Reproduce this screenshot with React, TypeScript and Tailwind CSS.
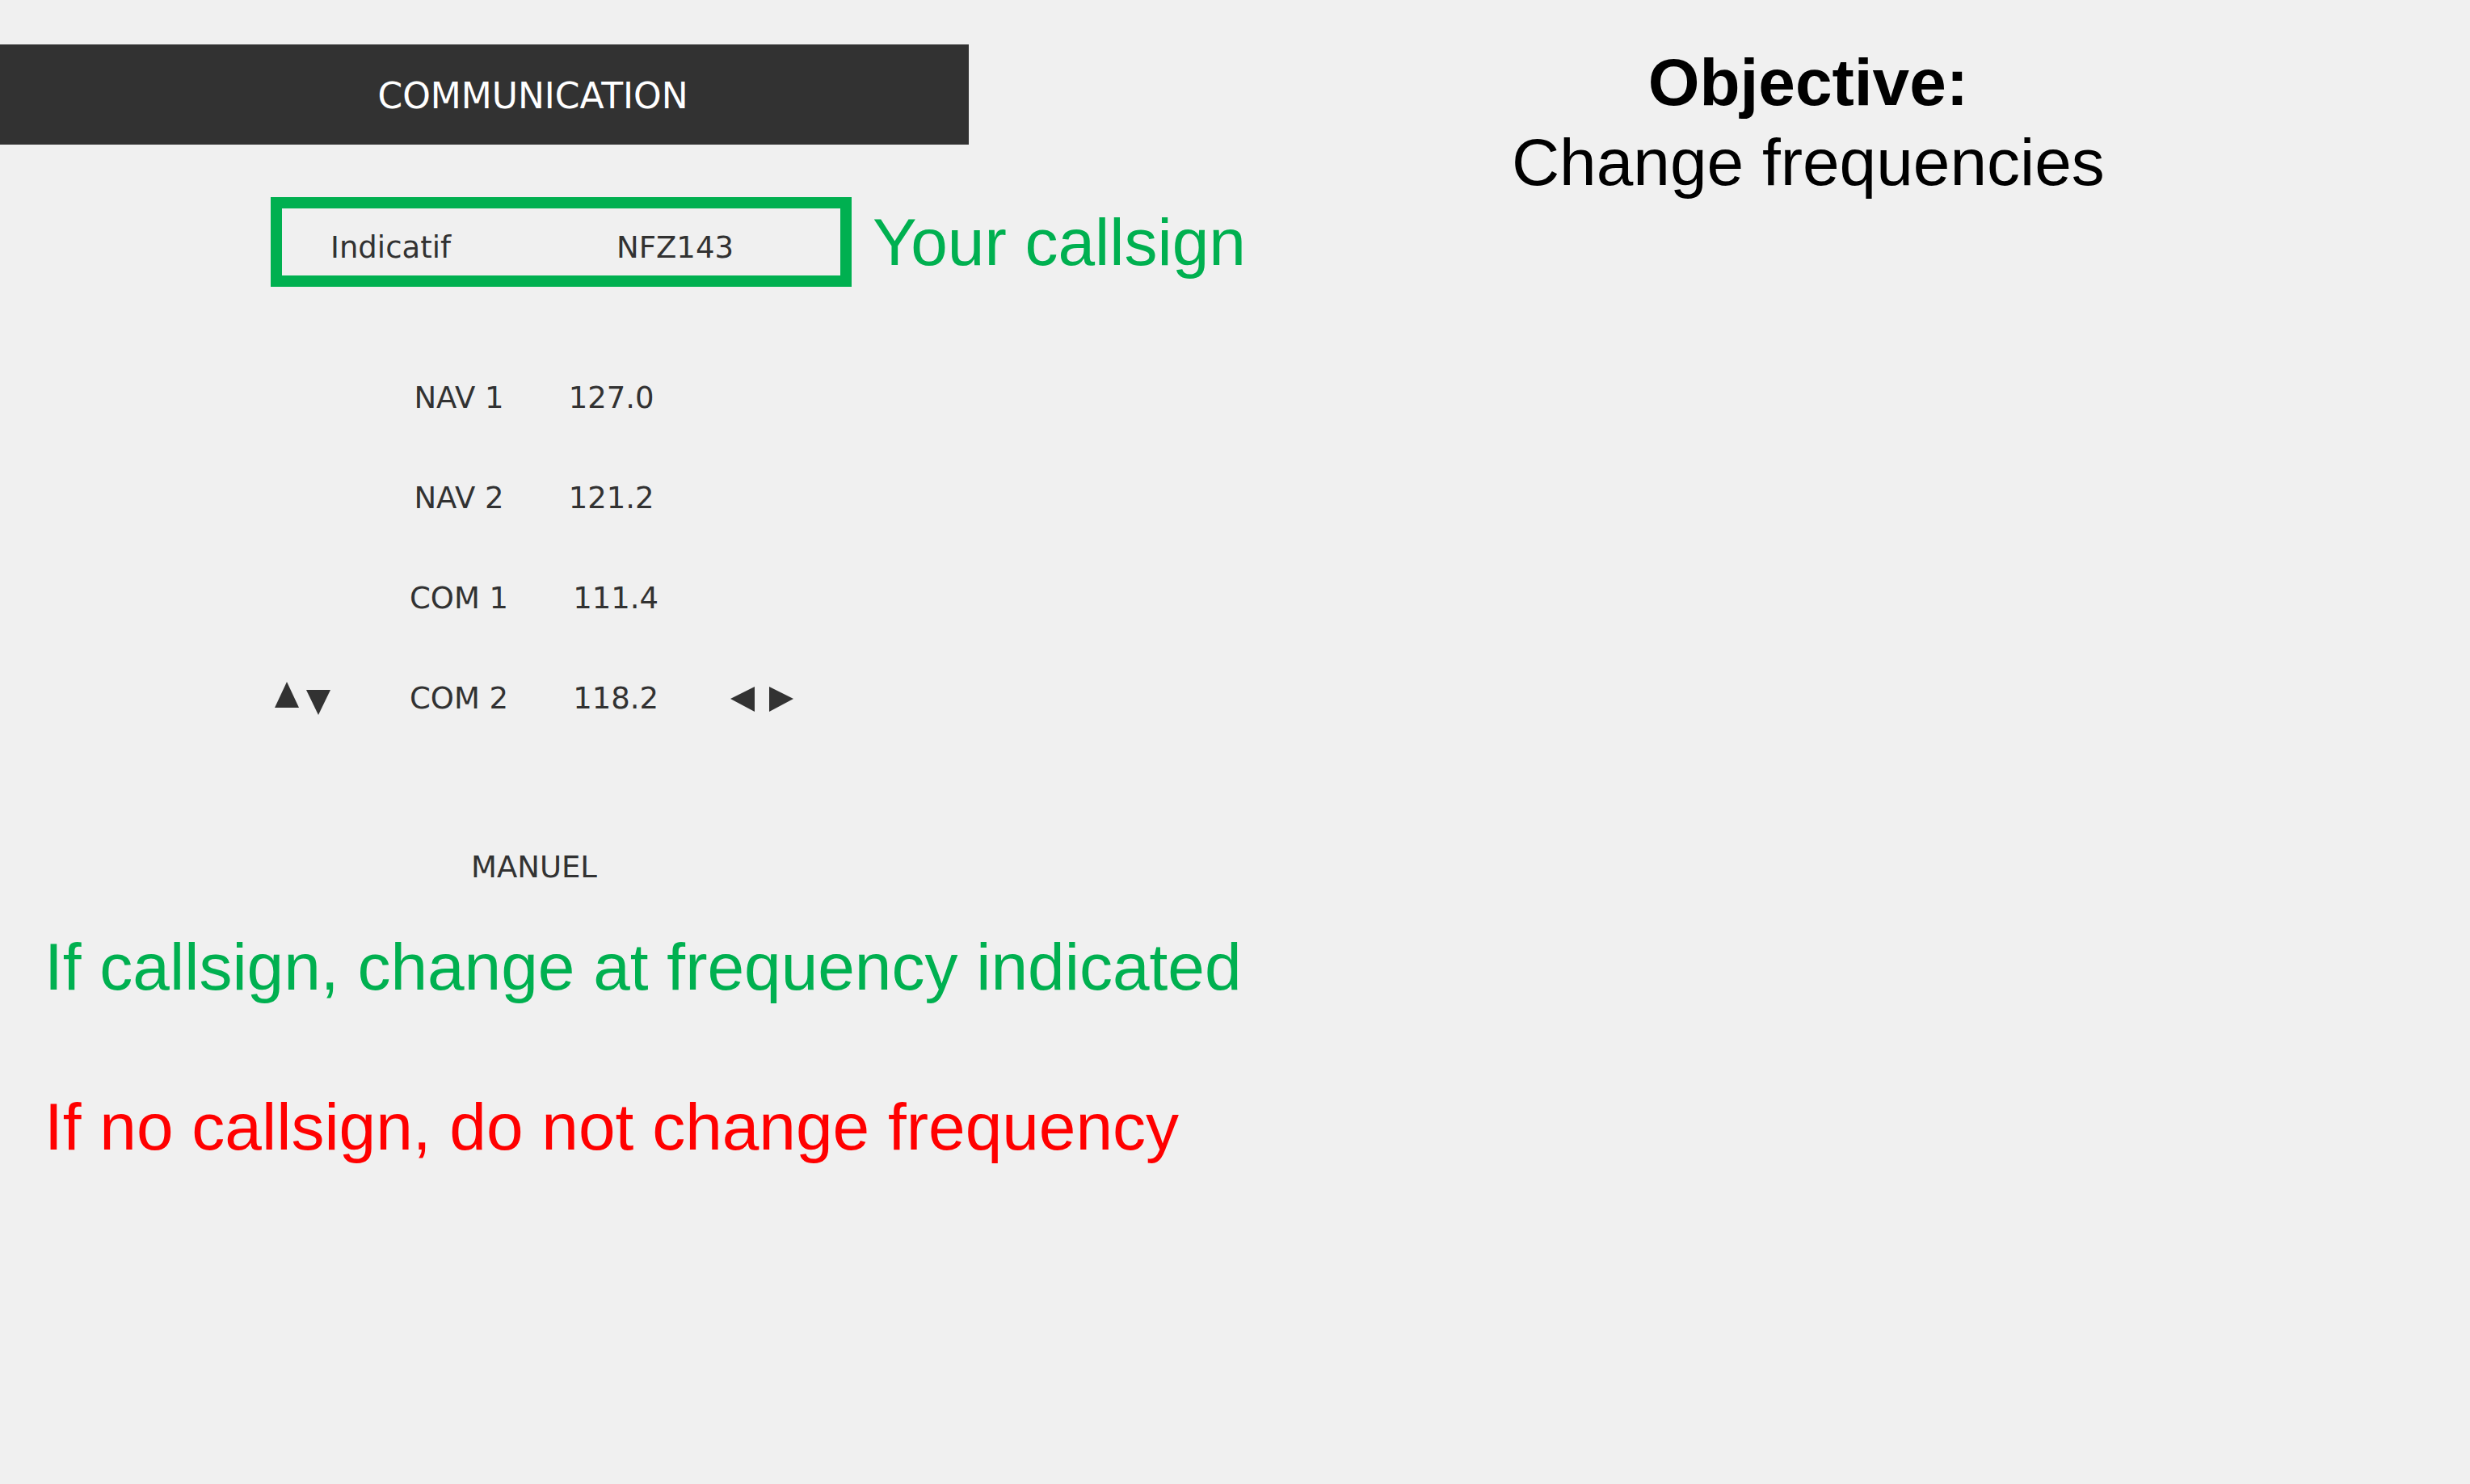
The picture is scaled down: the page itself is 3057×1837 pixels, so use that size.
import React from 'react';

const radios = [
  { label: 'NAV 1', frequency: '127.0' },
  { label: 'NAV 2', frequency: '121.2' },
  { label: 'COM 1', frequency: '111.4' },
  { label: 'COM 2', frequency: '118.2', selected: true },
];

function ArrowButton({ label, points, className = '' }: { label: string; points: string; className?: string }) {
  return (
    <button type="button" aria-label={label} className={className}>
      <svg width="30" height="31" viewBox="0 0 30 31" className="block overflow-visible" fill="#323232">
        <polygon points={points} />
      </svg>
    </button>
  );
}

function RadioRow({ label, frequency, selected }: { label: string; frequency: string; selected?: boolean }) {
  return (
    <li className="grid h-[124px] w-[642px] grid-cols-[1fr_auto_1fr] items-center">
      <div className="flex gap-[9px]">
        {selected && (
          <>
            <ArrowButton label="Previous radio" points="15,-1 30,31 0,31" className="pb-[9px]" />
            <ArrowButton label="Next radio" points="0,0 30,0 15,31" className="pt-[9px]" />
          </>
        )}
      </div>
      <div className="flex gap-[80px] whitespace-pre">
        <span>{label}</span>
        <span>{frequency}</span>
      </div>
      <div className="flex justify-end gap-[18px]">
        {selected && (
          <>
            <ArrowButton label="Decrease frequency" points="30,0 30,31 0,15" />
            <ArrowButton label="Increase frequency" points="0,0 30,15 0,31" />
          </>
        )}
      </div>
    </li>
  );
}

export default function App() {
  return (
    <main className="flex min-h-screen bg-[#f0f0f0] font-['Liberation_Sans',Arial,sans-serif] text-[82px] leading-[99px]">
      <section className="w-[52.3%] pt-[55px]">
        <header className="flex h-[124px] w-3/4 items-center justify-center bg-[#323232] pt-[3px] pl-[120px]">
          <h1 className="font-['DejaVu_Sans',sans-serif] text-[44px] leading-[60px] text-white">COMMUNICATION</h1>
        </header>

        <div className="mt-[65px] flex items-center gap-[26px] pl-[335px] whitespace-nowrap text-[#00b050]">
          <div className="flex h-[111px] w-[719px] shrink-0 items-center justify-between border-[14px] border-[#00b050] pt-[15px] pr-[132px] pl-[60px] font-['DejaVu_Sans',sans-serif] text-[37px] leading-[60px] text-[#323232]">
            <span>Indicatif</span>
            <span>NFZ143</span>
          </div>
          <p>Your callsign</p>
        </div>

        <div className="mt-[76px] flex w-[1322px] flex-col items-center font-['DejaVu_Sans',sans-serif] text-[37px] leading-[60px] text-[#323232]">
          <ul>
            {radios.map((radio) => (
              <RadioRow key={radio.label} {...radio} />
            ))}
          </ul>
          <p className="mt-[117px]">MANUEL</p>
        </div>

        <div className="mt-[43px] flex flex-col gap-[99px] pl-[55px] whitespace-nowrap">
          <p className="text-[#00b050]">If callsign, change at frequency indicated</p>
          <p className="text-[#ff0000]">If no callsign, do not change frequency</p>
        </div>
      </section>

      <aside className="flex-1 pt-[52px] pr-[180px] text-center text-black">
        <h2 className="font-bold">Objective:</h2>
        <p>Change frequencies</p>
      </aside>
    </main>
  );
}
